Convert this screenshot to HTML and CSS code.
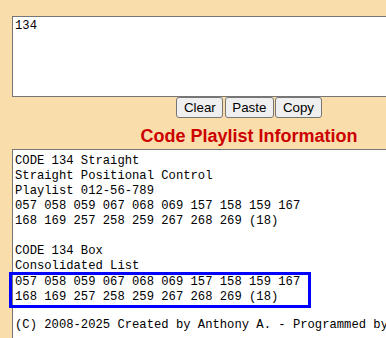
FILE: index.html
```html
<!DOCTYPE html>
<html>
<head>
  <title>Code Playlist</title>
  <link rel="stylesheet" href="styles.css">
</head>
<body>
  <div class="wrap">
    <textarea id="entrada" class="entrada">134</textarea>

    <div class="botones">
      <button type="button">Clear</button>
      <button type="button">Paste</button>
      <button type="button">Copy</button>
    </div>

    <h2 class="titulo">Code Playlist Information</h2>

    <div id="salida" class="salida">CODE 134 Straight
Straight Positional Control
Playlist 012-56-789
057 058 059 067 068 069 157 158 159 167
168 169 257 258 259 267 268 269 (18)

CODE 134 Box
Consolidated List
<div class="marcado">057 058 059 067 068 069 157 158 159 167
168 169 257 258 259 267 268 269 (18)</div>
(C) 2008-2025 Created by Anthony A. - Programmed by</div>
  </div>
</body>
</html>
```

FILE: styles.css
```css
html, body {
  overflow: hidden;
}

body {
  margin: 0;
  padding: 0;
  background-color: #F9DEAB;
  font-family: "Liberation Sans", Arial, sans-serif;
}

.wrap {
  width: 474px;
  margin: 16px 0 0 12px;
}

.entrada {
  display: block;
  box-sizing: border-box;
  width: 474px;
  height: 81px;
  margin: 0;
  padding: 2px;
  border: 1px solid #767676;
  background-color: white;
  font-family: "Liberation Mono", monospace;
  font-size: 12.2px;
  line-height: 15px;
  color: black;
  resize: none;
}

.botones {
  display: flex;
  justify-content: center;
  gap: 1.5px;
}

.botones button {
  height: 21px;
  padding: 0 6.5px;
  border: 1px solid #767676;
  border-radius: 3px;
  background-color: #EFEFEF;
  font-family: "Liberation Sans", Arial, sans-serif;
  font-size: 13.33px;
  color: black;
}

.titulo {
  margin: 8px 0 2px;
  font-size: 18px;
  line-height: 21px;
  font-weight: bold;
  color: #CC0000;
  text-align: center;
}

.salida {
  box-sizing: border-box;
  width: 474px;
  height: 240px;
  padding: 4px 2px 3px;
  border: 1px solid #767676;
  background-color: white;
  font-family: "Liberation Mono", monospace;
  font-size: 12.2px;
  line-height: 15px;
  white-space: pre;
}

.marcado {
  width: fit-content;
  margin: -2px 0 -5px -6px;
  padding: 0 8px 0 3px;
  border: 3px solid #0000FF;
}
```
